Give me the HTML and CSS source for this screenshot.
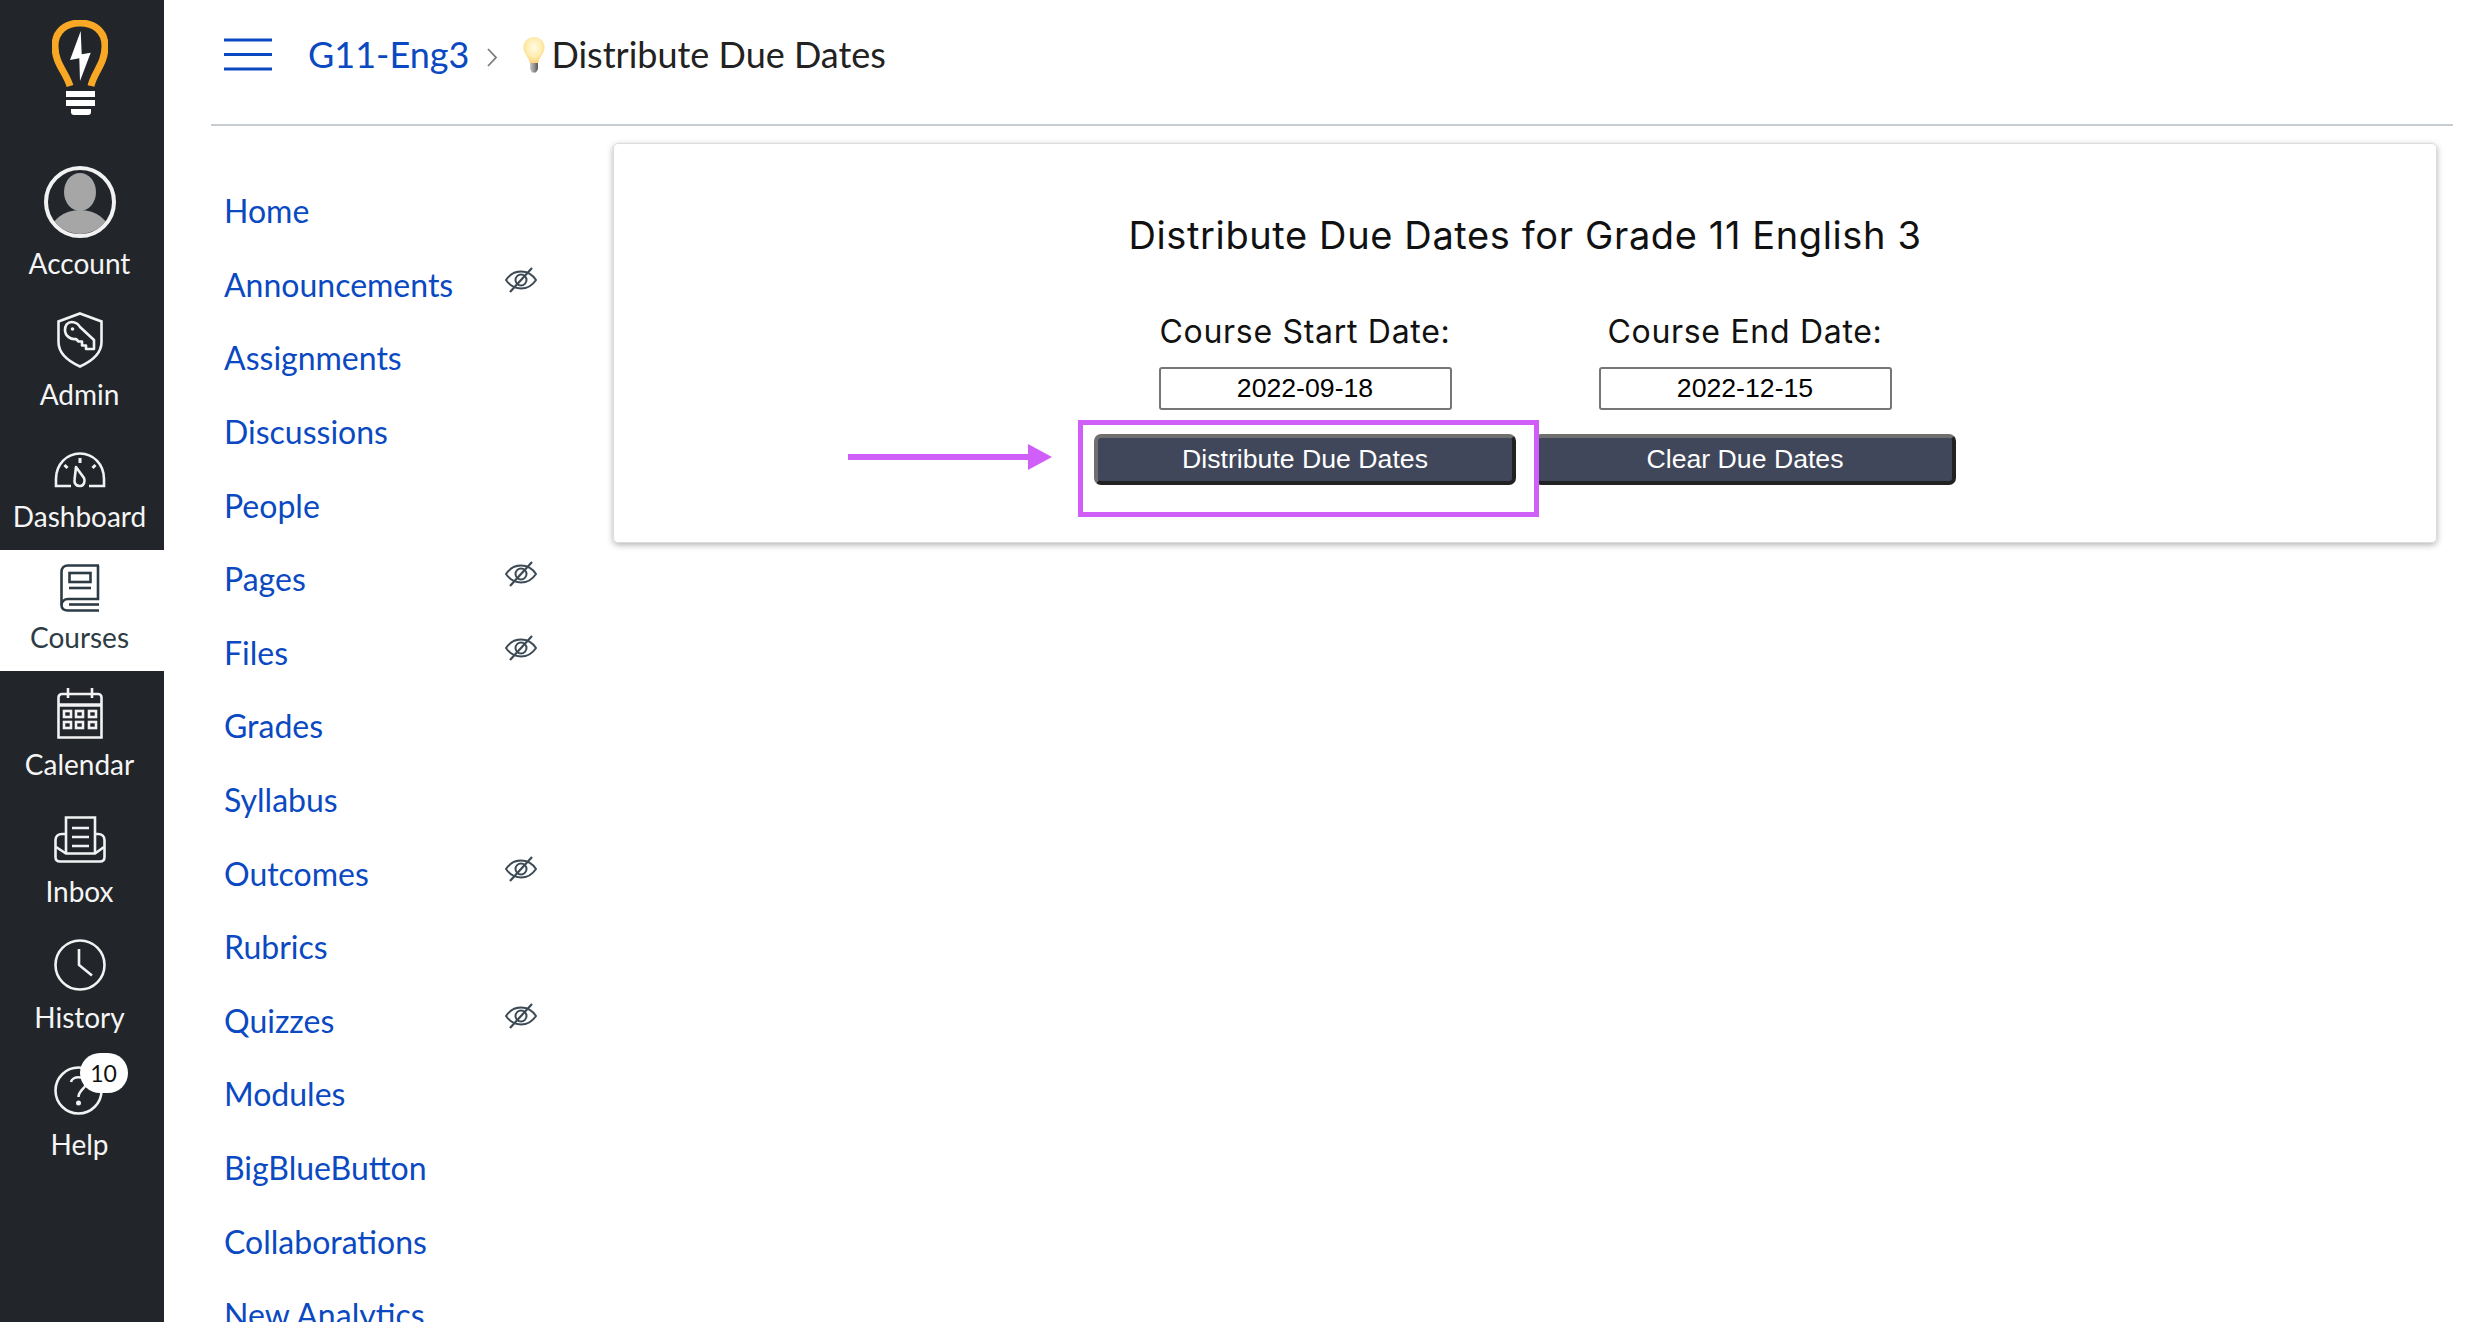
FILE: index.html
```html
<!DOCTYPE html>
<html lang="en">
<head>
<meta charset="utf-8">
<title>Distribute Due Dates</title>
<link rel="stylesheet" href="styles.css">
</head>
<body>
<div class="app">
  <aside class="rail">
    <div class="rail-logo">
      <svg class="logo" viewBox="0 0 56 95" width="56" height="95">
        <path d="M18 66C14 52 3 44 3 26 3 11 14 3 28 3s25 8 25 23c0 18-11 26-14 40" fill="none" stroke="#f9a825" stroke-width="7"/>
        <path d="M28.7 11 18 40l9.3-1.7L28 61l10.7-28.3-9 1.6z" fill="#fff"/>
        <rect x="14" y="71" width="29" height="6" fill="#fff"/>
        <rect x="14" y="80" width="29" height="6" fill="#fff"/>
        <path d="M19 89h20v3a3 3 0 0 1-3 3H22a3 3 0 0 1-3-3z" fill="#fff"/>
      </svg>
    </div>
    <a class="rail-item h-account">
      <svg class="gap-8" viewBox="0 0 72 72" width="72" height="72">
        <defs><clipPath id="avatarClip"><circle cx="36" cy="36" r="32"/></clipPath></defs>
        <g clip-path="url(#avatarClip)" fill="#a6a6a6">
          <ellipse cx="36" cy="26" rx="16" ry="19"/>
          <ellipse cx="36" cy="68" rx="30" ry="24"/>
        </g>
        <circle cx="36" cy="36" r="34" fill="none" stroke="#f2f2f2" stroke-width="4"/>
      </svg>
      <span>Account</span>
    </a>
    <a class="rail-item h-admin">
      <svg class="gap-9" viewBox="0 0 46 56" width="46" height="56" fill="none" stroke="#f2f2f2" stroke-width="2.6">
        <path d="M23 1.5 44.5 9.5V30C44.5 42 33 50 23 54.5 13 50 1.500 42 1.500 30V9.500z"/>
        <path d="M9.500 12.500C13 8.500 20 9.500 23 15L37 28V37H29V33.500H25V29.500H21.500L19 27C14 28 8 24 8 18 8 16 8.500 14 9.500 12.500z" stroke-linejoin="round"/>
        <circle cx="15.500" cy="17" r="1.800" fill="#f2f2f2" stroke="none"/>
      </svg>
      <span>Admin</span>
    </a>
    <a class="rail-item h-dashboard">
      <svg class="gap-11" viewBox="0 0 52 36" width="52" height="36" fill="none" stroke="#f2f2f2" stroke-width="2.6">
        <path d="M17 34H2V27C2 12 13 1.500 26 1.500S50 12 50 27V34H35"/>
        <path d="M22 15 30 26C31.500 29 30 33.500 26.500 34 22.500 34.500 20 31.500 20.500 28z" stroke-linejoin="round"/>
        <path d="M26 6V11M10.500 13l3 3M41.500 13l-3 3" stroke-width="3"/>
      </svg>
      <span>Dashboard</span>
    </a>
    <a class="rail-item h-courses active">
      <svg class="gap-8" viewBox="0 0 40 48" width="40" height="48" fill="none" stroke="#2d3b45" stroke-width="2.600">
        <path d="M39 1.500H8C4 1.500 1.500 4 1.500 8V41C1.500 45 4 46.500 8 46.500H39"/>
        <path d="M38 1.500V35H8C4 35 1.500 38 1.500 41"/>
        <path d="M9 40.500H39"/>
        <rect x="9.500" y="9" width="21" height="9"/>
        <path d="M9 24H31"/>
      </svg>
      <span>Courses</span>
    </a>
    <a class="rail-item h-calendar">
      <svg class="gap-8" viewBox="0 0 46 51" width="46" height="51" fill="none" stroke="#f2f2f2" stroke-width="2.600">
        <path d="M5 6H41A3.500 3.500 0 0 1 44.500 9.500V49.500H1.500V9.500A3.500 3.500 0 0 1 5 6Z"/>
        <path d="M1.500 17H44.500" stroke-width="3.500"/>
        <path d="M11 0V10M35 0V10" stroke-width="2.600"/>
        <rect x="7" y="23" width="7" height="6"/><rect x="19" y="23" width="7" height="6"/><rect x="32" y="23" width="7" height="6"/>
        <rect x="7" y="34" width="7" height="6"/><rect x="19" y="34" width="7" height="6"/><rect x="32" y="34" width="7" height="6"/>
      </svg>
      <span>Calendar</span>
    </a>
    <a class="rail-item h-inbox">
      <svg class="gap-11" viewBox="0 0 52 47" width="52" height="47" fill="none" stroke="#f2f2f2" stroke-width="2.600">
        <path d="M12 37V1.500H41V37"/>
        <path d="M18 12H35M18 21H35M18 30H35"/>
        <path d="M12 18H8C4 18 1.500 20.500 1.500 24V41C1.500 44 3.500 45.500 6 45.500H46C48.500 45.500 50.500 44 50.500 41V24C50.500 20.500 48 18 44 18H41"/>
        <path d="M2 31 12 37.500H41L50 31"/>
      </svg>
      <span>Inbox</span>
    </a>
    <a class="rail-item h-history">
      <svg class="gap-9" viewBox="0 0 52 52" width="52" height="52" fill="none" stroke="#f2f2f2" stroke-width="2.600">
        <circle cx="26" cy="26" r="24.500"/>
        <path d="M25 10V26L38 36.500"/>
      </svg>
      <span>History</span>
    </a>
    <a class="rail-item h-help">
      <div class="help-wrap">
        <svg class="gap-12" viewBox="0 0 49 49" width="49" height="49" fill="none" stroke="#f2f2f2" stroke-width="2.600">
          <circle cx="24.500" cy="24.500" r="23"/>
          <path d="M17 16C18 10 31 9 32 17 32.500 22 24.500 24 24.500 31"/>
          <circle cx="24.500" cy="37" r="2.500" fill="#f2f2f2" stroke="none"/>
        </svg>
        <b class="badge">10</b>
      </div>
      <span>Help</span>
    </a>
  </aside>

  <div class="main">
    <header class="topbar">
      <svg class="burger" viewBox="0 0 48 33" width="48" height="33" fill="none" stroke="#0a49c1" stroke-width="3">
        <path d="M0 2H48M0 16.500H48M0 31H48"/>
      </svg>
      <a class="crumb-link">G11-Eng3</a>
      <svg class="crumb-sep" viewBox="0 0 12 22" width="12" height="22" fill="none" stroke="#7b7b7b" stroke-width="1.800">
        <path d="M2 3 10 11.500 2 20"/>
      </svg>
      <svg class="crumb-bulb" viewBox="0 0 22 36" width="22" height="36">
        <defs>
          <radialGradient id="bulbGlow" cx="50%" cy="40%" r="60%">
            <stop offset="0" stop-color="#fffbe6"/><stop offset=".6" stop-color="#ffedb0"/><stop offset="1" stop-color="#fbd27a"/>
          </radialGradient>
          <linearGradient id="bulbBase" x1="0" x2="1" y1="0" y2="0">
            <stop offset="0" stop-color="#c9c9c9"/><stop offset=".6" stop-color="#8a8a8a"/><stop offset="1" stop-color="#555"/>
          </linearGradient>
        </defs>
        <path d="M11 0C5 0 .5 4.500 .5 10.500 .5 16 5.500 20 7 26H15C16.500 20 21.500 16 21.500 10.500 21.500 4.500 17 0 11 0Z" fill="url(#bulbGlow)"/>
        <path d="M7 26H15V32L13 35.500H9L7 32Z" fill="url(#bulbBase)"/>
      </svg>
      <h1 class="crumb-current">Distribute Due Dates</h1>
    </header>

    <div class="body-row">
      <nav class="course-nav">
        <a class="nav-link">Home</a>
        <a class="nav-link">Announcements<svg class="eye"><use href="#eyeOff"/></svg></a>
        <a class="nav-link">Assignments</a>
        <a class="nav-link">Discussions</a>
        <a class="nav-link">People</a>
        <a class="nav-link">Pages<svg class="eye"><use href="#eyeOff"/></svg></a>
        <a class="nav-link">Files<svg class="eye"><use href="#eyeOff"/></svg></a>
        <a class="nav-link">Grades</a>
        <a class="nav-link">Syllabus</a>
        <a class="nav-link">Outcomes<svg class="eye"><use href="#eyeOff"/></svg></a>
        <a class="nav-link">Rubrics</a>
        <a class="nav-link">Quizzes<svg class="eye"><use href="#eyeOff"/></svg></a>
        <a class="nav-link">Modules</a>
        <a class="nav-link">BigBlueButton</a>
        <a class="nav-link">Collaborations</a>
        <a class="nav-link">New Analytics</a>
      </nav>

      <section class="card">
        <h2 class="card-title">Distribute Due Dates for Grade 11 English 3</h2>
        <div class="form-grid">
          <label class="field-label">Course Start Date:</label>
          <label class="field-label">Course End Date:</label>
          <div class="date-box">2022-09-18</div>
          <div class="date-box">2022-12-15</div>
          <button class="action">Distribute Due Dates</button>
          <button class="action">Clear Due Dates</button>
        </div>
        <div class="callout-box"></div>
        <svg class="callout-arrow" viewBox="0 0 204 26" width="204" height="26">
          <path d="M0 10H180V0L204 13 180 26V16H0Z" fill="#d05ffa"/>
        </svg>
      </section>
    </div>
  </div>
</div>
<svg class="defs-only" width="0" height="0">
  <symbol id="eyeOff" viewBox="0 0 32 28">
    <g fill="none" stroke="#3c4a55" stroke-width="2">
      <path d="M1 14C5 8 10 5.500 16 5.500S27 8 31 14C27 20 22 22.500 16 22.500S5 20 1 14Z"/>
      <circle cx="16" cy="14" r="5.500"/>
      <path d="M27 2 5 26" stroke-width="2.200"/>
    </g>
  </symbol>
</svg>
</body>
</html>
```
FILE: styles.css
```css
* { box-sizing: border-box; }
html, body { margin: 0; height: 1322px; overflow: hidden; background: #fff; }
body { font-family: Lato, "Liberation Sans", sans-serif; }
.app { display: flex; height: 1322px; }

.rail { width: 164px; flex: none; background: #22262b; color: #f5f5f5; display: flex; flex-direction: column; }
.rail-logo { height: 150px; padding: 20px 5px 0 0; display: flex; justify-content: center; align-items: flex-start; }
.rail-item { display: flex; flex-direction: column; align-items: center; justify-content: flex-end; padding: 0 5px 15px 0; font-size: 28px; line-height: 34px; }
.rail-item span { display: block; }
.rail-item svg { display: block; }
.h-account { height: 147px; padding-bottom: 17px; }
.h-admin { height: 132px; padding-bottom: 18px; }
.h-dashboard { height: 121px; padding-bottom: 17px; }
.h-courses { height: 121px; padding-bottom: 17px; }
.h-calendar { height: 128px; padding-bottom: 18px; }
.h-inbox { height: 126px; padding-bottom: 17px; }
.h-history { height: 124px; }
.h-help { height: 128px; padding-bottom: 16px; }
.active { background: #fff; color: #2d3b45; }
.gap-8 { margin-bottom: 8px; }
.gap-9 { margin-bottom: 9px; }
.gap-11 { margin-bottom: 11px; }
.gap-12 { margin-bottom: 12px; }
.help-wrap { position: relative; margin-right: 3px; }
.badge { position: absolute; left: 26px; top: -13px; width: 48px; height: 40px; border-radius: 20px; background: #fff; color: #111; font-weight: 400; font-size: 23px; line-height: 40px; text-align: center; }

.main { flex: 1; min-width: 0; padding-left: 47px; padding-right: 39px; }
.topbar { height: 126px; border-bottom: 2px solid #c7cdd1; padding: 0 0 16px 13px; display: flex; align-items: center; }
.burger { flex: none; margin-right: 36px; }
.crumb-link { font-size: 36px; color: #0a49c1; }
.crumb-sep { flex: none; margin: 6px 25px 0 17px; }
.crumb-bulb { flex: none; margin: 2px 6px 0 0; }
.crumb-current { margin: 0; font-weight: 400; font-size: 36px; color: #222; }

.body-row { display: flex; align-items: flex-start; }
.course-nav { width: 402px; flex: none; padding: 48px 0 0 13px; }
.nav-link { width: 313px; height: 73.6px; display: flex; justify-content: space-between; align-items: center; font-size: 32px; color: #0a49c1; white-space: nowrap; }
.eye { width: 32px; height: 28px; margin-bottom: 9px; }
.defs-only { position: absolute; }

.card { position: relative; width: 1824px; height: 400px; margin-top: 17px; border: 1px solid #dcdcdc; border-radius: 5px; box-shadow: 0 2px 6px rgba(0,0,0,.3); padding-top: 67px; }
.card-title { margin: 0; text-align: center; font-family: Inter, "Open Sans", sans-serif; font-weight: 400; font-size: 38px; line-height: 48px; letter-spacing: .62px; color: #111; }
.form-grid { display: grid; grid-template-columns: 440px 440px; justify-content: center; justify-items: center; margin-top: 53px; }
.field-label { font-family: Inter, "Open Sans", sans-serif; font-size: 32px; line-height: 40px; letter-spacing: .7px; color: #111; }
.date-box { width: 293px; height: 43px; margin: 15px 0 24px; border: 2px solid #767676; border-radius: 3px; text-align: center; font-family: "Liberation Sans", Arial, sans-serif; font-size: 26.67px; line-height: 39px; color: #000; }
.action { width: 422px; height: 51px; padding: 0; border: 4px solid; border-color: #6f6f6f #222 #222 #6f6f6f; border-radius: 7px; background: #40475a; color: #fff; font-family: "Liberation Sans", Arial, sans-serif; font-size: 26.67px; }
.callout-box { position: absolute; left: 464px; top: 276px; width: 461px; height: 97px; border: 5px solid #d05ffa; }
.callout-arrow { position: absolute; left: 234px; top: 300px; }
```
